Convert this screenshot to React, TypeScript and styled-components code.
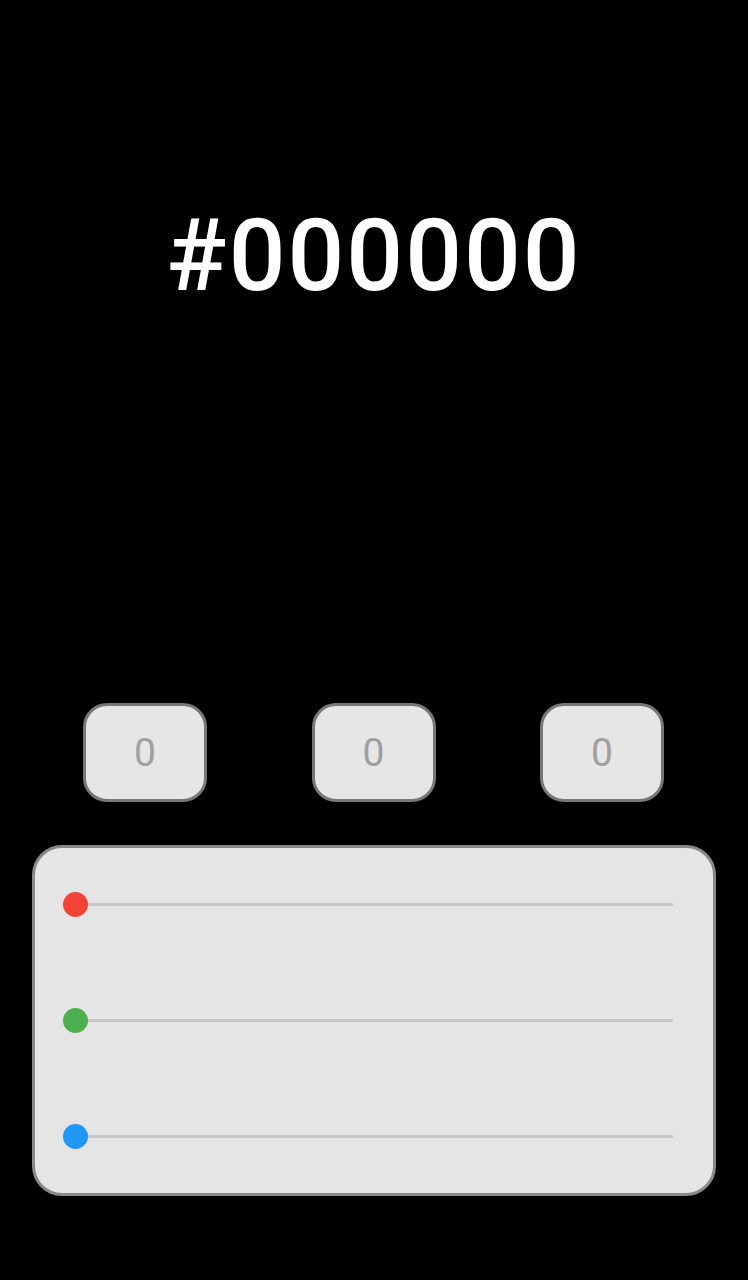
import React, { useState } from "react";
import styled, { createGlobalStyle } from "styled-components";

const GlobalStyle = createGlobalStyle`
  html, body {
    margin: 0;
    padding: 0;
    background: #000;
  }
  body {
    font-family: Roboto, "Liberation Sans", sans-serif;
  }
`;

const Screen = styled.div`
  width: 748px;
  min-height: 1280px;
  background: #000;
  display: flex;
  flex-direction: column;
  align-items: center;
  padding-top: 200px;
  box-sizing: border-box;
`;

const HexTitle = styled.h1`
  margin: 0;
  height: 112px;
  font-size: 100px;
  line-height: 112px;
  font-weight: 500;
  color: #fff;
  letter-spacing: 2px;
  text-align: center;
`;

const ValueRow = styled.div`
  margin-top: 391px;
  width: 748px;
  display: grid;
  grid-template-columns: repeat(3, 124px);
  justify-content: space-between;
  padding: 0 84px 0 83px;
  box-sizing: border-box;
`;

const ValueBox = styled.div`
  height: 99px;
  box-sizing: border-box;
  border: 3px solid #777;
  border-radius: 24px;
  background: #e6e6e6;
  display: flex;
  align-items: center;
  justify-content: center;
  color: #a0a0a0;
  font-size: 39px;
`;

const Panel = styled.div`
  margin-top: 43px;
  width: 684px;
  box-sizing: border-box;
  border: 3px solid #888;
  border-radius: 30px;
  background: #e5e5e5;
  padding: 44px 40px 44px 40px;
  display: flex;
  flex-direction: column;
  gap: 91px;
`;

const SliderRow = styled.div`
  position: relative;
  height: 25px;
  display: flex;
  align-items: center;
`;

const Track = styled.div`
  width: 100%;
  height: 3px;
  border-radius: 2px;
  background: #c6c6c6;
`;

const Thumb = styled.div<{ $color: string }>`
  position: absolute;
  top: 0;
  width: 25px;
  height: 25px;
  margin-left: -12.5px;
  border-radius: 50%;
  background: ${(p) => p.$color};
`;

const channels = [
  { key: "r", color: "#f44336" },
  { key: "g", color: "#4caf50" },
  { key: "b", color: "#2196f3" },
];

export default function App() {
  const [rgb] = useState({ r: 0, g: 0, b: 0 });
  const hex =
    "#" +
    [rgb.r, rgb.g, rgb.b]
      .map((v) => v.toString(16).padStart(2, "0"))
      .join("")
      .toUpperCase();

  return (
    <>
      <GlobalStyle />
      <Screen>
        <HexTitle>{hex}</HexTitle>

        <ValueRow>
          <ValueBox>{rgb.r}</ValueBox>
          <ValueBox>{rgb.g}</ValueBox>
          <ValueBox>{rgb.b}</ValueBox>
        </ValueRow>

        <Panel>
          {channels.map((c) => {
            const v = rgb[c.key as "r" | "g" | "b"];
            return (
              <SliderRow key={c.key}>
                <Track />
                <Thumb $color={c.color} style={{ left: `${(v / 255) * 100}%` }} />
              </SliderRow>
            );
          })}
        </Panel>
      </Screen>
    </>
  );
}
